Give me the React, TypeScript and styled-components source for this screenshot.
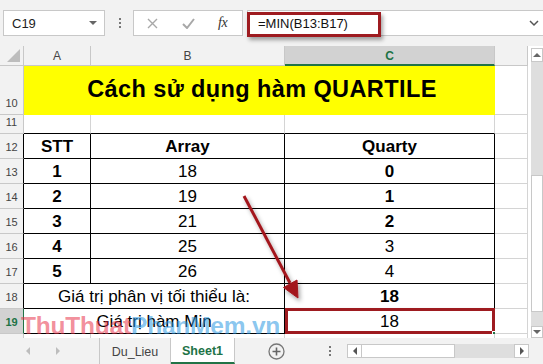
import React from 'react';
import styled, { createGlobalStyle } from 'styled-components';

const GRID = '#d4d4d4';
const HEAD_LINE = '#c8c8c8';
const GREEN = '#217346';
const DARK_RED = '#9e1b20';

const GlobalStyle = createGlobalStyle`
  html, body { margin: 0; padding: 0; background: #fff; }
  body { font-family: 'Liberation Sans', Arial, sans-serif; }
  * { box-sizing: border-box; }
`;

const Screen = styled.div`
  position: relative;
  width: 543px;
  height: 364px;
  overflow: hidden;
  display: flex;
  flex-direction: column;
  background: #f2f2f2;
`;

/* ---------- formula bar ---------- */
const FormulaBar = styled.div`
  height: 46px;
  display: flex;
  align-items: center;
  padding-left: 3px;
`;

const NameBox = styled.div`
  width: 102px;
  height: 26px;
  background: #fff;
  border: 1px solid ${HEAD_LINE};
  display: flex;
  align-items: center;
  justify-content: space-between;
  padding: 0 7px 0 8px;
  font-size: 13px;
  color: #222;
`;

const DropTriangle = styled.span`
  width: 0;
  height: 0;
  border-left: 4px solid transparent;
  border-right: 4px solid transparent;
  border-top: 4px solid #666;
`;

const VDots = styled.span<{ $ml?: number; $mr?: number }>`
  display: flex;
  flex-direction: column;
  align-self: center;
  gap: 2px;
  margin: 0 ${p => p.$mr ?? 13}px 0 ${p => p.$ml ?? 14}px;
  & > i {
    width: 2px;
    height: 2px;
    background: #777;
  }
`;

const FxBox = styled.div`
  width: 110px;
  height: 26px;
  background: #fff;
  border: 1px solid ${HEAD_LINE};
  display: flex;
  align-items: center;
  padding-left: 13px;
`;

const FxButton = styled.span<{ $w: number }>`
  width: ${p => p.$w}px;
  display: flex;
  align-items: center;
`;

const FxLabel = styled.span`
  font-family: 'Liberation Serif', 'Times New Roman', serif;
  font-style: italic;
  font-size: 14px;
  color: #333;
  letter-spacing: -0.5px;
`;

const FormulaInput = styled.div`
  position: relative;
  flex: 1;
  height: 26px;
  margin-left: 4px;
  background: #fff;
  border: 1px solid ${HEAD_LINE};
  border-right: none;
  display: flex;
  align-items: center;
  justify-content: space-between;
  padding: 0 4px 0 10px;
  font-size: 13px;
  color: #111;
`;

const FormulaMark = styled.span`
  position: absolute;
  left: -1px;
  top: 1px;
  width: 134px;
  height: 25px;
  border: 3px solid ${DARK_RED};
  box-shadow: 2px 3px 4px rgba(0, 0, 0, 0.35);
`;

/* ---------- sheet ---------- */
const SheetArea = styled.div`
  height: 292px;
  display: flex;
  background: #fff;
`;

const Grid = styled.div`
  width: 528px;
  height: 292px;
  overflow: hidden;
  display: grid;
  grid-template-columns: 24px 67px 194px 210px 33px;
  grid-template-rows: 20px 49px 19px repeat(9, 25px);
  background: #fff;
`;

const Corner = styled.div`
  background: #f2f2f2;
  border-right: 1px solid ${HEAD_LINE};
  border-bottom: 1px solid ${HEAD_LINE};
  display: flex;
  align-items: flex-end;
  justify-content: flex-end;
  padding: 0 3px 3px 0;
  &::after {
    content: '';
    width: 0;
    height: 0;
    border-left: 13px solid transparent;
    border-bottom: 13px solid #bdbdbd;
  }
`;

const ColHead = styled.div<{ $sel?: boolean }>`
  background: ${p => (p.$sel ? '#d2d2d2' : '#f2f2f2')};
  border-right: 1px solid ${HEAD_LINE};
  border-bottom: ${p => (p.$sel ? `2px solid ${GREEN}` : `1px solid ${HEAD_LINE}`)};
  display: flex;
  align-items: center;
  justify-content: center;
  padding-top: ${p => (p.$sel ? 1 : 0)}px;
  font-size: 12px;
  color: ${p => (p.$sel ? GREEN : '#444')};
  font-weight: ${p => (p.$sel ? 700 : 400)};
`;

const RowHead = styled.div<{ $sel?: boolean; $edge?: string }>`
  background: ${p => (p.$sel ? '#d2d2d2' : '#f2f2f2')};
  border-right: 1px solid ${p => (p.$sel ? GREEN : p.$edge ?? HEAD_LINE)};
  border-bottom: 1px solid ${HEAD_LINE};
  display: flex;
  align-items: flex-end;
  justify-content: center;
  padding-bottom: 5px;
  font-size: 11px;
  line-height: 11px;
  color: ${p => (p.$sel ? GREEN : '#444')};
  font-weight: ${p => (p.$sel ? 700 : 400)};
`;

const TitleCell = styled.div`
  grid-column: span 3;
  background: #ffff00;
  border-right: 1px solid #ffff00;
  border-bottom: 1px solid #ffff00;
  display: flex;
  align-items: center;
  justify-content: center;
  padding: 0 0 2px 6px;
  font-size: 23.5px;
  font-weight: 700;
  letter-spacing: 0.4px;
  color: #000;
`;

const Cell = styled.div<{ $span?: number; $r?: string; $b?: string; $bold?: boolean }>`
  position: relative;
  grid-column: span ${p => p.$span ?? 1};
  background: #fff;
  border-right: 1px solid ${p => p.$r ?? GRID};
  border-bottom: 1px solid ${p => p.$b ?? GRID};
  display: flex;
  align-items: flex-end;
  justify-content: center;
  padding-bottom: 3px;
  font-size: 17px;
  line-height: 17px;
  white-space: nowrap;
  font-weight: ${p => (p.$bold ? 700 : 400)};
  color: #000;
`;

const SelectionMark = styled.span`
  position: absolute;
  left: 0;
  top: -1px;
  right: -1px;
  bottom: -1px;
  border: 3px solid ${DARK_RED};
  box-shadow: 2px 3px 4px rgba(0, 0, 0, 0.35);
`;

const FillHandle = styled.span`
  position: absolute;
  right: -4px;
  bottom: -4px;
  width: 6px;
  height: 6px;
  background: ${GREEN};
  border: 1px solid #fff;
`;

/* ---------- vertical scrollbar ---------- */
const VScroll = styled.div`
  width: 15px;
  padding: 2px 0 0 3px;
  display: flex;
  flex-direction: column;
  background: #fff;
`;

const ScrollBtn = styled.div<{ $h: number }>`
  height: ${p => p.$h}px;
  background: #fff;
  border: 1px solid ${HEAD_LINE};
  display: flex;
  align-items: center;
  justify-content: center;
`;

const Track = styled.div`
  flex: 1;
  background: #dedede;
  display: flex;
  flex-direction: column;
  padding: 113px 0 14px;
`;

const VThumb = styled.div`
  flex: 1;
  background: #fff;
  border: 1px solid ${HEAD_LINE};
`;

const Tri = styled.span<{ $dir: 'up' | 'down' | 'left' | 'right'; $c?: string; $s?: number }>`
  width: 0;
  height: 0;
  border: ${p => p.$s ?? 4}px solid transparent;
  ${p => {
    const c = p.$c ?? '#666';
    const s = p.$s ?? 4;
    if (p.$dir === 'up') return `border-bottom: ${s}px solid ${c}; border-top-width: 0;`;
    if (p.$dir === 'down') return `border-top: ${s}px solid ${c}; border-bottom-width: 0;`;
    if (p.$dir === 'left') return `border-right: ${s}px solid ${c}; border-left-width: 0;`;
    return `border-left: ${s}px solid ${c}; border-right-width: 0;`;
  }}
`;

/* ---------- sheet tabs ---------- */
const TabBar = styled.div`
  height: 26px;
  display: flex;
  align-items: stretch;
  background: #f2f2f2;
  font-size: 12.5px;
`;

const NavArrows = styled.div`
  width: 100px;
  display: flex;
  align-items: center;
  gap: 26px;
  padding-left: 26px;
  border-right: 1px solid ${HEAD_LINE};
`;

const Tab = styled.div<{ $active?: boolean; $w: number }>`
  width: ${p => p.$w}px;
  display: flex;
  align-items: center;
  justify-content: center;
  padding-top: 1px;
  background: ${p => (p.$active ? '#fff' : 'transparent')};
  color: ${p => (p.$active ? GREEN : '#444')};
  font-weight: ${p => (p.$active ? 700 : 400)};
  border-right: 1px solid ${HEAD_LINE};
  border-bottom: ${p => (p.$active ? `2px solid ${GREEN}` : 'none')};
`;

const AddSheet = styled.div`
  margin-left: 33px;
  display: flex;
  align-items: center;
`;

const HScroll = styled.div`
  width: 182px;
  height: 14px;
  align-self: center;
  margin-left: 4px;
  display: flex;
  background: #dedede;
`;

const HBtn = styled.div`
  width: 15px;
  background: #fff;
  border: 1px solid ${HEAD_LINE};
  display: flex;
  align-items: center;
  justify-content: center;
`;

const HThumb = styled.div`
  width: 93px;
  background: #fff;
  border: 1px solid ${HEAD_LINE};
  border-left: none;
`;

const HSpace = styled.div`
  flex: 1;
`;

/* ---------- annotations ---------- */
const Overlay = styled.svg`
  position: absolute;
  left: 0;
  top: 0;
  pointer-events: none;
`;

const Watermark = styled.div`
  position: absolute;
  left: 21px;
  top: 312px;
  font-size: 24.5px;
  font-weight: 700;
  letter-spacing: -0.2px;
  pointer-events: none;
  white-space: nowrap;
`;

const Mark = styled.span<{ $c: string }>`
  color: ${p => p.$c};
`;

type Row = { n: number; a: string; b: string; c: string; aBold?: boolean; bBold?: boolean; cBold?: boolean };

const rows: Row[] = [
  { n: 12, a: 'STT', b: 'Array', c: 'Quarty', aBold: true, bBold: true, cBold: true },
  { n: 13, a: '1', b: '18', c: '0', aBold: true, cBold: true },
  { n: 14, a: '2', b: '19', c: '1', aBold: true, cBold: true },
  { n: 15, a: '3', b: '21', c: '2', aBold: true, cBold: true },
  { n: 16, a: '4', b: '25', c: '3', aBold: true },
  { n: 17, a: '5', b: '26', c: '4', aBold: true },
];

export default function App() {
  return (
    <Screen>
      <GlobalStyle />
      <FormulaBar>
        <NameBox>
          C19
          <DropTriangle />
        </NameBox>
        <VDots $mr={12}>
          <i />
          <i />
          <i />
        </VDots>
        <FxBox>
          <FxButton $w={35}>
            <svg width="11" height="11" viewBox="0 0 11 11">
              <path d="M1 1 L10 10 M10 1 L1 10" stroke="#a8a8a8" strokeWidth="1.4" />
            </svg>
          </FxButton>
          <FxButton $w={36}>
            <svg width="13" height="11" viewBox="0 0 13 11">
              <path d="M1 6 L5 10 L12 1" stroke="#a8a8a8" strokeWidth="2" fill="none" />
            </svg>
          </FxButton>
          <FxLabel>fx</FxLabel>
        </FxBox>
        <FormulaInput>
          <FormulaMark />
          <span>=MIN(B13:B17)</span>
          <svg width="10" height="7" viewBox="0 0 10 7">
            <path d="M1 1 L5 5 L9 1" stroke="#555" strokeWidth="1.5" fill="none" />
          </svg>
        </FormulaInput>
      </FormulaBar>

      <SheetArea>
        <Grid>
          <Corner />
          <ColHead>A</ColHead>
          <ColHead>B</ColHead>
          <ColHead $sel>C</ColHead>
          <ColHead />

          <RowHead>10</RowHead>
          <TitleCell>Cách sử dụng hàm QUARTILE</TitleCell>
          <Cell />

          <RowHead>11</RowHead>
          <Cell $b="#000" />
          <Cell $b="#000" />
          <Cell $b="#000" />
          <Cell />

          {rows.map(r => (
            <React.Fragment key={r.n}>
              <RowHead $edge="#000">{r.n}</RowHead>
              <Cell $r="#000" $b="#000" $bold={r.aBold}>{r.a}</Cell>
              <Cell $r="#000" $b="#000" $bold={r.bBold}>{r.b}</Cell>
              <Cell $r="#000" $b="#000" $bold={r.cBold}>{r.c}</Cell>
              <Cell />
            </React.Fragment>
          ))}

          <RowHead $edge="#000">18</RowHead>
          <Cell $span={2} $r="#000" $b="#000">Giá trị phân vị tối thiểu là:</Cell>
          <Cell $r="#000" $b="#000" $bold>18</Cell>
          <Cell />

          <RowHead $sel>19</RowHead>
          <Cell $span={2} $r="#000" $b="#000">Giá trị hàm Min</Cell>
          <Cell $r="#000" $b="#000">
            18
            <SelectionMark />
            <FillHandle />
          </Cell>
          <Cell />

          <RowHead />
          <Cell />
          <Cell />
          <Cell />
          <Cell />
        </Grid>
        <VScroll>
          <ScrollBtn $h={14}>
            <Tri $dir="up" $s={4} />
          </ScrollBtn>
          <Track>
            <VThumb />
          </Track>
          <ScrollBtn $h={12}>
            <Tri $dir="down" $s={4} />
          </ScrollBtn>
        </VScroll>
      </SheetArea>

      <TabBar>
        <NavArrows>
          <Tri $dir="left" $c="#bdbdbd" />
          <Tri $dir="right" $c="#bdbdbd" />
        </NavArrows>
        <Tab $w={71}>Du_Lieu</Tab>
        <Tab $w={64} $active>
          Sheet1
        </Tab>
        <AddSheet>
          <svg width="17" height="17" viewBox="0 0 17 17">
            <circle cx="8.5" cy="8.5" r="7.5" stroke="#777" strokeWidth="1.3" fill="none" />
            <path d="M8.5 4.5 V12.5 M4.5 8.5 H12.5" stroke="#666" strokeWidth="1.6" />
          </svg>
        </AddSheet>
        <VDots $ml={44} $mr={12}>
          <i />
          <i />
          <i />
        </VDots>
        <HScroll>
          <HBtn>
            <Tri $dir="left" $c="#555" />
          </HBtn>
          <HThumb />
          <HSpace />
          <HBtn>
            <Tri $dir="right" $c="#555" />
          </HBtn>
        </HScroll>
      </TabBar>

      <Overlay width="543" height="364" viewBox="0 0 543 364">
        <defs>
          <filter id="shadow" x="-20%" y="-20%" width="140%" height="140%">
            <feDropShadow dx="2" dy="3" stdDeviation="2" floodColor="#000" floodOpacity="0.35" />
          </filter>
        </defs>
        <g filter="url(#shadow)" fill="#a3191f" stroke="#a3191f">
          <line x1="244" y1="196" x2="290" y2="283" strokeWidth="3" />
          <polygon points="298,298 283.5,287.5 297,280" strokeWidth="1" />
        </g>
      </Overlay>

      <Watermark>
        <Mark $c="rgba(232, 48, 72, 0.55)">ThuThuat</Mark>
        <Mark $c="rgba(40, 150, 225, 0.55)">PhanMem.vn</Mark>
      </Watermark>
    </Screen>
  );
}
